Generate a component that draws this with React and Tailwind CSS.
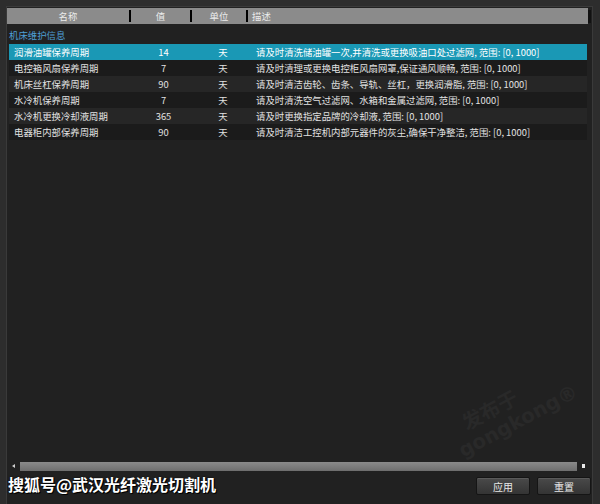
const rows = [
  { name: "润滑油罐保养周期", value: 14, unit: "天", desc: "请及时清洗储油罐一次,并清洗或更换吸油口处过滤网, 范围: [0, 1000]" },
  { name: "电控箱风扇保养周期", value: 7, unit: "天", desc: "请及时清理或更换电控柜风扇网罩,保证通风顺畅, 范围: [0, 1000]" },
  { name: "机床丝杠保养周期", value: 90, unit: "天", desc: "请及时清洁齿轮、齿条、导轨、丝杠，更换润滑脂, 范围: [0, 1000]" },
  { name: "水冷机保养周期", value: 7, unit: "天", desc: "请及时清洗空气过滤网、水箱和金属过滤网, 范围: [0, 1000]" },
  { name: "水冷机更换冷却液周期", value: 365, unit: "天", desc: "请及时更换指定品牌的冷却液, 范围: [0, 1000]" },
  { name: "电器柜内部保养周期", value: 90, unit: "天", desc: "请及时清洁工控机内部元器件的灰尘,确保干净整洁, 范围: [0, 1000]" },
]

const font = "font-['Microsoft_YaHei','Noto_Sans_CJK_SC',sans-serif]"

// column header with the little black resize grip on its right edge
function HeaderCell({ label, className, left }) {
  return (
    <div className={`relative flex items-center h-full ${className}`}>
      <span className={left ? "pl-1" : "w-full text-center"}>{label}</span>
    </div>
  )
}

function Grip() {
  return <div className="w-[2px] h-[12px] bg-black shrink-0" />
}

export default function App() {
  return (
    <div className={`w-[600px] h-[504px] bg-[#2d2d2d] pl-[6px] pr-[7px] pt-[6px] overflow-hidden ${font}`}>
      <div className="relative h-full bg-[#212121] border-l border-t border-r border-[#3a3a3a] flex flex-col">
        {/* table header */}
        <div className="mt-[1px] mr-[1px] h-[16px] flex items-center text-[9.4px] text-[#ececec]">
          <div className="flex-1 h-full bg-[#8b8b8b] flex items-center">
            <HeaderCell label="名称" className="w-[122px]" />
            <Grip />
            <HeaderCell label="值" className="w-[59px]" />
            <Grip />
            <HeaderCell label="单位" className="w-[54px]" />
            <Grip />
            <HeaderCell label="描述" className="flex-1" left />
          </div>
          <div className="w-[3px] h-[13px] bg-[#111]" />
        </div>

        {/* group title */}
        <div className="h-[20px] flex items-end pl-[2px] pb-[2px] text-[9.4px] text-[#4f9fd6]">机床维护信息</div>

        {/* rows */}
        <div className="flex flex-col pl-[2px] pr-[5px] text-[9.4px] text-[#e2e2e2]">
          {rows.map((r, i) => (
            <div
              key={r.name}
              className={`h-[16px] flex items-center ${
                i === 0 ? "bg-[#1a98b5] text-white" : i % 2 ? "bg-[#1b1b1b]" : "bg-[#262626]"
              }`}
            >
              <div className="w-[122px] pl-[5px] whitespace-nowrap">{r.name}</div>
              <div className="w-[61px] text-center pl-[4px]">{r.value}</div>
              <div className="w-[56px] text-center pl-[6px]">{r.unit}</div>
              <div className="flex-1 pl-[8px] whitespace-nowrap">{r.desc}</div>
            </div>
          ))}
        </div>

        <div className="flex-1" />

        {/* faint site stamp over the empty area */}
        <div className="absolute left-[440px] top-[382px] -rotate-[28deg] whitespace-nowrap text-[#292929] text-[20px] font-bold leading-[22px] pointer-events-none select-none font-['DejaVu_Sans','Noto_Sans_CJK_SC',sans-serif]">
          <span className="pl-[16px]">发布于</span>
          <br />
          gongkong®
        </div>

        {/* horizontal scrollbar */}
        <div className="h-[10px] mb-[3px] flex items-center pr-[2px]">
          <div className="w-[13px] flex justify-center">
            <div className="w-0 h-0 border-y-[2px] border-y-transparent border-r-[3px] border-r-[#cfcfcf]" />
          </div>
          <div className="flex-1 h-[9px] bg-gradient-to-b from-[#8a8a8a] to-[#6e6e6e]" />
          <div className="w-[13px] flex justify-center">
            <div className="w-[3px] h-[4px] bg-[#e8e8e8]" />
          </div>
        </div>

        {/* footer */}
        <div className="h-[30px] flex items-start justify-between pl-[1px] pr-[1px]">
          <div className="text-[16px] font-bold text-white leading-[20px] [text-shadow:1px_1px_0_#000,0_0_2px_#000]">
            搜狐号@武汉光纤激光切割机
          </div>
          <div className="flex gap-[7px] pt-[3px]">
            {["应用", "重置"].map((t) => (
              <button
                key={t}
                className="w-[54px] h-[18px] rounded-[2px] border border-[#151515] bg-gradient-to-b from-[#4a4a4a] to-[#343434] text-[10px] text-[#e6e6e6] shadow-[inset_0_1px_0_#5a5a5a]"
              >
                {t}
              </button>
            ))}
          </div>
        </div>
      </div>
    </div>
  )
}
